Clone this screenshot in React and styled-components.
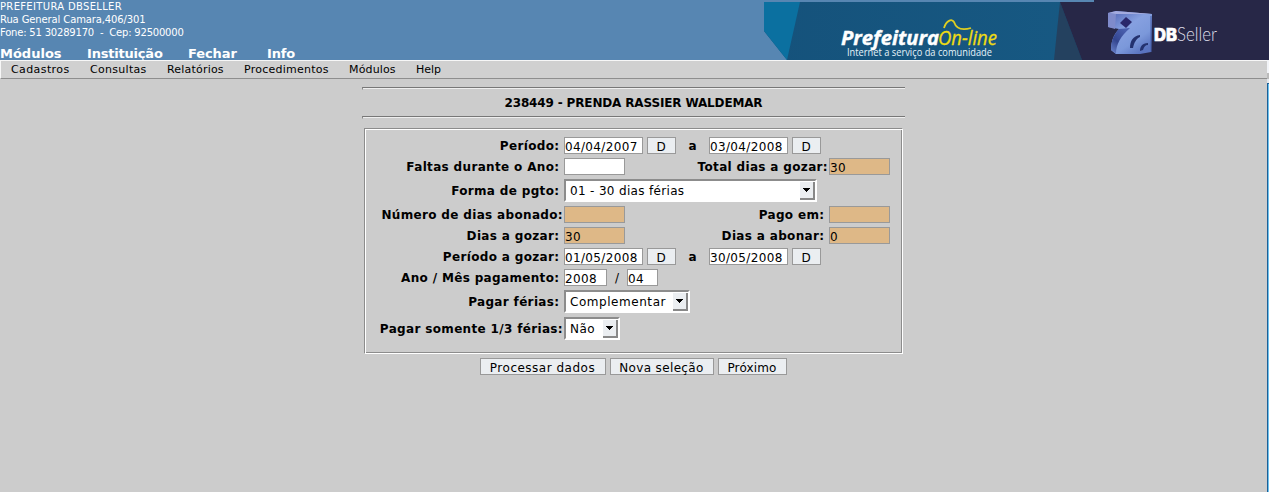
import React from 'react';
import styled, { createGlobalStyle } from 'styled-components';

const Global = createGlobalStyle`
  * { box-sizing: border-box; }
  body { margin: 0; background: #ccc; font: 12px "DejaVu Sans", sans-serif; color: #000; overflow: hidden; }
`;
const Page = styled.div`height: 492px; display: flex; flex-direction: column;`;
const Header = styled.header`
  height: 60px; flex: none; display: flex; justify-content: space-between;
  background: #5786b2; color: #fff;
`;
const Identity = styled.div`
  display: flex; flex-direction: column; font-size: 10px; line-height: 13px; white-space: pre;
`;
const Line = styled.span`letter-spacing: ${p => p.$ls || 0}px;`;
const TopNav = styled.nav`display: flex; margin-top: 6px; font-size: 13px; font-weight: bold; line-height: 18px;`;
const TopLink = styled.span`width: ${p => p.$w}px; letter-spacing: ${p => p.$ls || 0}px;`;
const Banner = styled.svg`display: block; width: 505px; height: 60px;`;
const Body = styled.div`flex: 1; display: flex;`;
const Main = styled.div`flex: 1; display: flex; flex-direction: column; align-items: center;`;
const Menu = styled.nav`
  align-self: stretch; height: 19px; display: flex; padding-left: 10px;
  background: #d0d0d0; border: solid; border-width: 1px 0 1px 1px;
  border-color: #f7f7f7 #999 #8e8e8e #f7f7f7;
  font-size: 11px; line-height: 17px;
`;
const MenuItem = styled.span`width: ${p => p.$w}px; letter-spacing: ${p => p.$ls || 0}px; white-space: nowrap;`;
const Rail = styled.div`width: 2px; display: flex; flex-direction: column;`;
const RailPart = styled.div`height: ${p => p.$h}px; background: ${p => p.$c};`;
const RailEdge = styled.div`
  flex: 1; background: #6cc3f0; border-left: 1px solid #1d5f96; border-top: 1px solid #1d5f96;
`;
const Rule = styled.div`
  width: 543px; height: 3px; background: #eee; border: solid; border-width: 1px 0 1px 1px;
  border-color: #777 #eee #ccc #888; margin-top: ${p => p.$mt}px;
`;
const Title = styled.h1`
  margin: 0; height: 26px; font-size: 12px; line-height: 26px; letter-spacing: -0.15px; white-space: nowrap;
`;
const Panel = styled.section`
  width: 539px; height: 226px; margin-top: 9px; padding: 8px 11px 0 16px;
  border: 1px solid; border-color: #8c8c8c #fff #fff #8c8c8c;
  box-shadow: inset 1px 1px #fff, inset -1px -1px #8c8c8c;
  display: flex; flex-direction: column; gap: 4px;
`;
const Row = styled.div`display: flex; align-items: center; height: ${p => p.$h || 17}px;`;
const Label = styled.label`
  width: 183px; padding: 2px ${p => (p.$tight ? 1 : 4.6)}px 0 0; flex: none;
  display: flex; justify-content: flex-end;
  font-weight: bold; line-height: 17px; letter-spacing: 0.34px; white-space: nowrap;
`;
const RightLabel = styled(Label)`width: 204px;`;
const Field = styled.div`
  width: ${p => p.$w}px; height: 17px; flex: none; border: 1px solid #999;
  background: ${p => (p.$locked ? '#deb887' : '#fff')};
  line-height: 18px; letter-spacing: 0.35px; white-space: nowrap;
`;
const Button = styled.button`
  width: ${p => p.$w}px; height: 17px; flex: none; margin: 0; padding: 2px 1px 0 0; border: 1px solid #999;
  background: #ebeef1; color: #000; font: 12px "DejaVu Sans", sans-serif; line-height: 15px;
  letter-spacing: ${p => p.$ls || 0}px; white-space: nowrap;
`;
const DateButton = styled(Button)`margin-left: 4px;`;
const Between = styled.span`width: 33px; padding-top: 2px; text-align: center; font-weight: bold; line-height: 17px;`;
const Slash = styled.span`width: 20px; padding-top: 2px; text-align: center; line-height: 17px;`;
const Select = styled.div`
  width: ${p => p.$w}px; height: 23px; flex: none; display: flex; align-items: center; justify-content: space-between;
  background: #fff; border: 2px solid; border-color: #8c8c8c #fff #fff #8c8c8c; padding-left: 4px;
  line-height: 18px; letter-spacing: ${p => p.$ls || 0}px; white-space: nowrap;
`;
const Drop = styled.span`
  width: 15px; height: 18px; display: flex; align-items: center; justify-content: center;
  background: #ebeef1; border: solid #888; border-width: 0 2px 2px 0;
`;
const Actions = styled.div`display: flex; gap: 4px; margin-top: 4px;`;

function Arrow() {
  return (
    <Drop>
      <svg width="7" height="4" shapeRendering="crispEdges">
        <path d="M0 0h7v1h-1v1h-1v1h-1v1h-1v-1h-1v-1h-1v-1h-1z" />
      </svg>
    </Drop>
  );
}

function DateRange({ from, to }) {
  return (
    <>
      <Field $w={79}>{from}</Field><DateButton $w={29}>D</DateButton>
      <Between>a</Between>
      <Field $w={79}>{to}</Field><DateButton $w={29}>D</DateButton>
    </>
  );
}

function BrandBanner() {
  return (
    <Banner viewBox="0 0 505 60">
      <defs>
        <linearGradient id="sea"><stop offset="0" stopColor="#15527b" /><stop offset="1" stopColor="#175983" /></linearGradient>
        <linearGradient id="front" x1="0" y1="0" x2=".7" y2="1"><stop offset="0" stopColor="#4c5fb0" /><stop offset=".45" stopColor="#86a0e0" /><stop offset=".75" stopColor="#7b98da" /><stop offset="1" stopColor="#5a74c0" /></linearGradient>
        <linearGradient id="leg" x1=".6" y1="0" x2="0" y2="1"><stop offset="0" stopColor="#4a5fae" /><stop offset=".5" stopColor="#33458f" /><stop offset="1" stopColor="#6f88cf" /></linearGradient>
      </defs>
      <path d="M0 2H330V60H23L0 31Z" fill="url(#sea)" />
      <path d="M0 2H36L23 60L0 31Z" fill="#0b70a0" />
      <path d="M296 2L290 60H318L296 2Z" fill="#24415f" />
      <path d="M296 2H330V0H505V60H318Z" fill="#272747" />
      <text x="77" y="45" textLength="98" lengthAdjust="spacingAndGlyphs" fill="#fff" stroke="#fff" strokeWidth=".4" fontFamily="Open Sans" fontWeight="700" fontStyle="italic" fontSize="20">Prefeitura</text>
      <text x="174" y="45" textLength="59" lengthAdjust="spacingAndGlyphs" fill="#efdc13" stroke="#efdc13" strokeWidth=".3" fontFamily="Open Sans" fontStyle="italic" fontSize="20">On-line</text>
      <path d="M180 28C182 21 188 18 190 22C192 28 197 31 207 28" fill="none" stroke="#dfce20" strokeWidth="1.8" />
      <text x="83" y="56" textLength="145" lengthAdjust="spacingAndGlyphs" fill="#e6f3f9" fontFamily="Open Sans" fontSize="10">Internet a serviço da comunidade</text>
      <path d="M344 13L352 11L388 14L387 52L376 54L352 54L347 50C347 41 350 34 355 29L344 27Z" fill="url(#front)" />
      <path d="M355 29C350 34 347 41 347 50L352 54C352 44 357 36 366 28Z" fill="url(#leg)" />
      <path d="M344 13L352 14L351 29L344 27Z" fill="#7f8bcb" />
      <path d="M344 13L352 11L388 14L352 14Z" fill="#a3abdf" />
      <path d="M362 17L368 22L362 28L356 23Z" fill="#29276b" />
      <path d="M376 35C369 36 366 41 366 48L369 48C370 43 372 39 376 37ZM384 43C378 43 376 47 376 51L379 50C380 47 381 45 384 45Z" fill="#24326f" />
      <path d="M387 16V52" stroke="#4660ab" strokeWidth="1" />
      <text x="390" y="41" textLength="23" lengthAdjust="spacingAndGlyphs" fill="#fff" stroke="#fff" strokeWidth=".7" fontFamily="Inter" fontWeight="800" fontSize="17">DB</text>
      <text x="413" y="41" textLength="40" lengthAdjust="spacingAndGlyphs" fill="#dedde8" fontFamily="Lato" fontWeight="300" fontSize="19">Seller</text>
    </Banner>
  );
}

export default function App() {
  return (
    <Page>
      <Global />
      <Header>
        <Identity>
          <Line $ls={0.33}>PREFEITURA DBSELLER</Line>
          <Line $ls={-0.12}>Rua General Camara,406/301</Line>
          <Line $ls={-0.2}>Fone: 51 30289170  -  Cep: 92500000</Line>
          <TopNav>
            <TopLink $w={87}>Módulos</TopLink><TopLink $w={101} $ls={-0.2}>Instituição</TopLink>
            <TopLink $w={79} $ls={-0.1}>Fechar</TopLink><TopLink $w={40} $ls={-0.2}>Info</TopLink>
          </TopNav>
        </Identity>
        <BrandBanner />
      </Header>
      <Body>
        <Main>
          <Menu>
            <MenuItem $w={79} $ls={0.4}>Cadastros</MenuItem><MenuItem $w={77} $ls={0.3}>Consultas</MenuItem>
            <MenuItem $w={77} $ls={0.2}>Relatórios</MenuItem><MenuItem $w={105} $ls={0.25}>Procedimentos</MenuItem>
            <MenuItem $w={67} $ls={0.15}>Módulos</MenuItem><MenuItem $w={40}>Help</MenuItem>
          </Menu>
          <Rule $mt={8} />
          <Title>238449 - PRENDA RASSIER WALDEMAR</Title>
          <Rule $mt={0} />
          <Panel>
            <Row><Label>Período:</Label><DateRange from="04/04/2007" to="03/04/2008" /></Row>
            <Row>
              <Label>Faltas durante o Ano:</Label><Field $w={61} />
              <RightLabel $tight>Total dias a gozar:</RightLabel><Field $w={61} $locked>30</Field>
            </Row>
            <Row $h={23}><Label>Forma de pgto:</Label><Select $w={253} $ls={0.33}>01 - 30 dias férias<Arrow /></Select></Row>
            <Row>
              <Label $tight>Número de dias abonado:</Label><Field $w={61} $locked />
              <RightLabel>Pago em:</RightLabel><Field $w={61} $locked />
            </Row>
            <Row>
              <Label>Dias a gozar:</Label><Field $w={61} $locked>30</Field>
              <RightLabel>Dias a abonar:</RightLabel><Field $w={61} $locked>0</Field>
            </Row>
            <Row><Label>Período a gozar:</Label><DateRange from="01/05/2008" to="30/05/2008" /></Row>
            <Row><Label>Ano / Mês pagamento:</Label><Field $w={43}>2008</Field><Slash>/</Slash><Field $w={31}>04</Field></Row>
            <Row $h={23}><Label>Pagar férias:</Label><Select $w={126} $ls={0.55}>Complementar<Arrow /></Select></Row>
            <Row $h={23}><Label $tight>Pagar somente 1/3 férias:</Label><Select $w={56} $ls={0.5}>Não<Arrow /></Select></Row>
          </Panel>
          <Actions>
            <Button $w={126} $ls={0.5}>Processar dados</Button><Button $w={104} $ls={0.35}>Nova seleção</Button><Button $w={69} $ls={0.15}>Próximo</Button>
          </Actions>
        </Main>
        <Rail>
          <RailPart $h={13} $c="#f2f4f8" /><RailPart $h={6} $c="#bbb" /><RailPart $h={4} $c="#e5e8ec" />
          <RailEdge />
        </Rail>
      </Body>
    </Page>
  );
}
